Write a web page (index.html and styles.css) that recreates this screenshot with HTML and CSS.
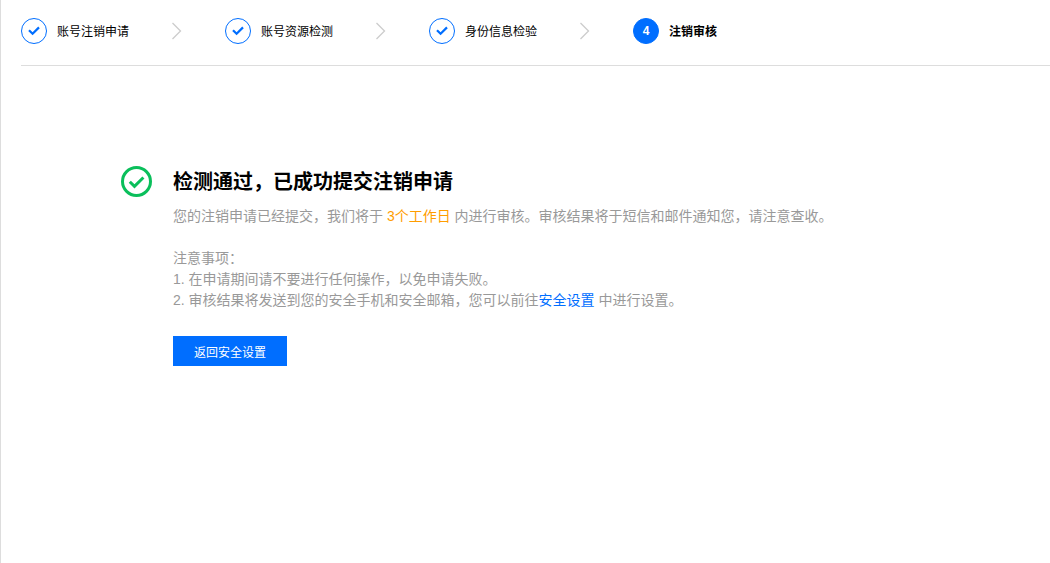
FILE: index.html
```html
<!DOCTYPE html>
<html lang="zh-CN">
<head>
  <meta charset="UTF-8">
  <meta name="viewport" content="width=device-width, initial-scale=1.0">
  <title>注销审核</title>
  <link rel="stylesheet" href="styles.css">
</head>
<body>
  <main class="page">
    <ol class="steps">
      <li class="step">
        <span class="step-icon"><svg width="12" height="10" viewBox="0 0 12 10"><path d="M1 4.2 4.6 7.8 11 1.4"/></svg></span>
        <span class="step-name">账号注销申请</span>
        <svg class="step-arrow" width="10" height="18" viewBox="0 0 10 18"><path d="M.5 1 8.5 9 .5 17"/></svg>
      </li>
      <li class="step">
        <span class="step-icon"><svg width="12" height="10" viewBox="0 0 12 10"><path d="M1 4.2 4.6 7.8 11 1.4"/></svg></span>
        <span class="step-name">账号资源检测</span>
        <svg class="step-arrow" width="10" height="18" viewBox="0 0 10 18"><path d="M.5 1 8.5 9 .5 17"/></svg>
      </li>
      <li class="step">
        <span class="step-icon"><svg width="12" height="10" viewBox="0 0 12 10"><path d="M1 4.2 4.6 7.8 11 1.4"/></svg></span>
        <span class="step-name">身份信息检验</span>
        <svg class="step-arrow" width="10" height="18" viewBox="0 0 10 18"><path d="M.5 1 8.5 9 .5 17"/></svg>
      </li>
      <li class="step current" aria-current="step">
        <span class="step-icon">4</span>
        <span class="step-name">注销审核</span>
      </li>
    </ol>

    <section class="result">
      <svg class="result-icon" width="32" height="32" viewBox="0 0 32 32">
        <circle cx="15.5" cy="15.5" r="14"/>
        <path d="M8.8 15.7 13.5 20.4 22.4 11.5"/>
      </svg>
      <div class="result-body">
        <h1>检测通过，已成功提交注销申请</h1>
        <p>您的注销申请已经提交，我们将于 <span class="days">3个工作日</span> 内进行审核。审核结果将于短信和邮件通知您，请注意查收。</p>
        <p class="notes">
          注意事项：<br>
          1. 在申请期间请不要进行任何操作，以免申请失败。<br>
          2. 审核结果将发送到您的安全手机和安全邮箱，您可以前往<a href="#">安全设置</a> 中进行设置。
        </p>
        <button type="button">返回安全设置</button>
      </div>
    </section>
  </main>
</body>
</html>
```

FILE: styles.css
```css
* {
  box-sizing: border-box;
}
body {
  margin: 0;
  background-color: #fff;
  color: #000;
  font-family: "Liberation Sans", "Noto Sans CJK SC", sans-serif;
  font-size: 14px;
}
.page {
  min-height: 100vh;
  padding-left: 20px;
  border-left: 1px solid #ddd;
}
.steps {
  display: flex;
  margin: 0;
  padding: 18px 0 21px;
  border-bottom: 1px solid #ddd;
  list-style: none;
  font-size: 12px;
}
.step {
  display: flex;
  align-items: center;
  height: 26px;
}
.step-icon {
  display: flex;
  align-items: center;
  justify-content: center;
  width: 26px;
  height: 26px;
  margin-right: 10px;
  border: 1px solid #006eff;
  border-radius: 50%;
}
.step-icon svg {
  fill: none;
  stroke: #006eff;
  stroke-width: 2.2;
}
.step-name {
  padding-bottom: 2px;
}
.step-arrow {
  margin: 0 43px;
  fill: none;
  stroke: #ccc;
  stroke-width: 1.3;
}
.current {
  font-weight: bold;
}
.current .step-icon {
  background-color: #006eff;
  color: #fff;
}
.result {
  display: flex;
  gap: 20px;
  padding: 100px 20px 40px 100px;
}
.result-icon {
  flex: none;
  fill: none;
  stroke: #0abf5b;
  stroke-width: 3;
}
h1 {
  margin: 0 0 8px;
  font-size: 20px;
  line-height: 32px;
}
p {
  margin: 0;
  color: #999;
  line-height: 21px;
}
.days {
  color: #ff9d00;
}
.notes {
  margin: 21px 0 25px;
}
a {
  color: #006eff;
  text-decoration: none;
}
button {
  height: 30px;
  padding: 0 20px;
  border: 1px solid #006eff;
  background-color: #006eff;
  color: #fff;
  font-family: inherit;
  font-size: 12px;
  cursor: pointer;
}
```
